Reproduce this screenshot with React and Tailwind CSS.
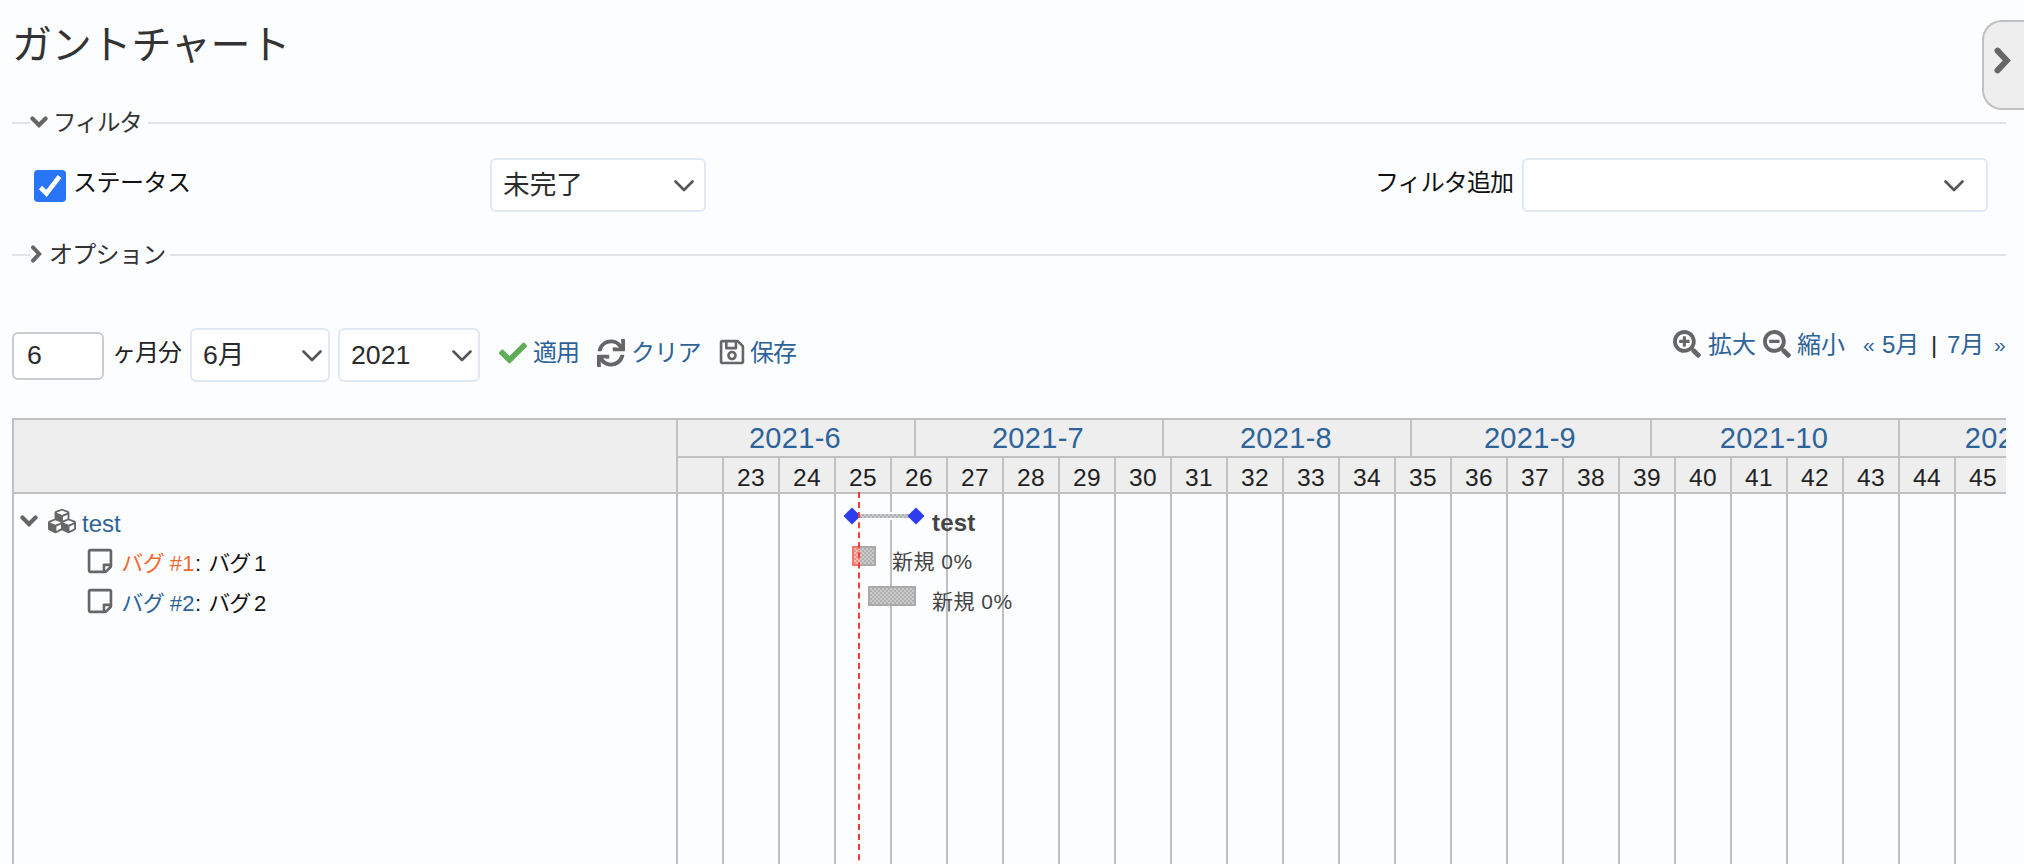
import React from "react";
import { FaCheck, FaCubes, FaRegSave, FaRegStickyNote, FaSearchMinus, FaSearchPlus, FaSync } from "react-icons/fa";

const months = [
  { label: "2021-6", width: "w-[238px]" },
  { label: "2021-7", width: "w-[248px]" },
  { label: "2021-8", width: "w-[248px]" },
  { label: "2021-9", width: "w-[240px]" },
  { label: "2021-10", width: "w-[248px]" },
  { label: "2021-11", width: "w-[240px]" },
];

const weeks = Array.from({ length: 23 }, (_, i) => 23 + i);

function Caret({ className = "" }) {
  return (
    <svg viewBox="0 0 20 12" className={"h-3 w-5 shrink-0 " + className} fill="none" stroke="#555" strokeWidth="2.6" strokeLinecap="round" strokeLinejoin="round">
      <path d="M1.5 1.5 10 10l8.5-8.5" />
    </svg>
  );
}

function ChevronDown({ className = "" }) {
  return (
    <svg viewBox="0 0 18 12" className={"h-3 w-[18px] shrink-0 " + className} fill="none" stroke="#666" strokeWidth="4.2" strokeLinecap="round" strokeLinejoin="miter">
      <path d="M2.4 2.6 9 9l6.6-6.4" />
    </svg>
  );
}

function ChevronRight({ className = "" }) {
  return (
    <svg viewBox="0 0 12 18" className={"shrink-0 " + className} fill="none" stroke="#666" strokeWidth="4" strokeLinecap="round" strokeLinejoin="miter">
      <path d="M3 2.4 9.2 9 3 15.6" />
    </svg>
  );
}

function Select({ value, className }) {
  return (
    <div className={"flex h-[54px] shrink-0 items-center justify-between rounded-md border-2 border-[#dfe8f3] bg-white pl-[11px] text-[26.67px] text-[#2b2b2b] " + className}>
      <span className="-mt-px">{value}</span>
      <Caret className="mt-0.5" />
    </div>
  );
}

function Legend({ icon, label, textClass }) {
  return (
    <div className="flex h-8 items-center">
      <span className="h-0.5 w-[18px] shrink-0 bg-[#e2e4e4]" />
      {icon}
      <span className={"shrink-0 whitespace-nowrap text-[#333] " + textClass}>{label}</span>
      <span className="h-0.5 flex-1 bg-[#e2e4e4]" />
    </div>
  );
}

function Issue({ id, name, number, color }) {
  return (
    <div className="flex h-10 items-center pl-[72px] text-[22px] text-[#111]">
      <FaRegStickyNote className="mr-[8px] size-7 shrink-0 text-[#666]" />
      <span className="mt-1 flex whitespace-pre">
        <span className={"w-[73px] tracking-[0.3px] [font-feature-settings:'palt'] " + color}>{"バグ #" + id}</span>
        <span className="w-[14px]">:</span>
        <span className="w-[45px] tracking-[-0.2px] [font-feature-settings:'palt']">{name}</span>
        <span>{number}</span>
      </span>
    </div>
  );
}

function Gantt() {
  return (
    <div className="flex h-[446px] w-[1994px] overflow-hidden border-l-2 border-[#c0c0c0]">
      <div className="w-[662px] shrink-0">
        <div className="h-[76px] border-y-2 border-[#c0c0c0] bg-[#eee]" />
        <div className="mt-1 flex h-10 items-center pt-2 text-[24px]">
          <ChevronDown className="-mt-0.5 ml-[6px]" />
          <FaCubes className="-mt-0.5 ml-[10px] size-7 shrink-0 text-[#666]" />
          <span className="ml-[6px] mt-[3px] text-[#2d6399]">test</span>
        </div>
        <div className="pt-[3px]">
          <Issue id="1" name="バグ" number="1" color="text-[#ee6a33]" />
          <Issue id="2" name="バグ" number="2" color="text-[#2d6399]" />
        </div>
      </div>
      <div className="relative w-[1330px] shrink-0 overflow-hidden">
        <div className="flex h-10 w-[1462px] border-y-2 border-[#c0c0c0] bg-[#eee]">
          {months.map((m) => (
            <div key={m.label} className={"flex shrink-0 items-center justify-center border-l-2 border-[#c0c0c0] pr-0.5 pt-px text-[29px] tracking-[0.3px] text-[#2d6399] " + m.width}>
              {m.label}
            </div>
          ))}
        </div>
        <div className="flex h-[408px] w-[1462px]">
          <div className="w-[46px] shrink-0 border-l-2 border-[#c0c0c0]">
            <div className="h-9 border-b-2 border-[#c0c0c0] bg-[#eee]" />
          </div>
          {weeks.map((w) => (
            <div key={w} className="w-14 shrink-0 border-l-2 border-[#c0c0c0]">
              <div className="flex h-9 items-center justify-center border-b-2 border-[#c0c0c0] bg-[#eee] pt-[6px] text-[24.5px] tracking-[0.4px] text-[#222]">
                {w}
              </div>
            </div>
          ))}
        </div>

        {/* Task bars placed on the time canvas */}
        <svg className="absolute left-0 top-[74px]" width="500" height="372">
          <defs>
            <pattern id="gray" width="4" height="4" patternUnits="userSpaceOnUse">
              <rect width="4" height="4" fill="#cacaca" />
              <rect width="2" height="2" fill="#b0b0b0" />
              <rect x="2" y="2" width="2" height="2" fill="#b0b0b0" />
            </pattern>
            <pattern id="red" width="4" height="4" patternUnits="userSpaceOnUse">
              <rect width="4" height="4" fill="#ffb9b3" />
              <rect width="2" height="2" fill="#f58e86" />
              <rect x="2" y="2" width="2" height="2" fill="#f58e86" />
            </pattern>
          </defs>
          <rect x="176" y="20" width="64" height="8" fill="#fcfdff" />
          <rect x="176" y="22" width="64" height="4" fill="url(#gray)" />
          <path d="M176 16.5l7.5 7.5-7.5 7.5-7.5-7.5zM240 16.5l7.5 7.5-7.5 7.5-7.5-7.5z" fill="#2f3cee" stroke="#2f3cee" strokeWidth="1.5" strokeLinejoin="round" />
          <rect x="176" y="54" width="24" height="20" fill="url(#gray)" />
          <rect x="177" y="55" width="22" height="18" fill="none" stroke="#aaa" strokeWidth="2" />
          <rect x="176" y="54" width="8" height="20" fill="url(#red)" />
          <path d="M184 55h-7v18h7" fill="none" stroke="#f0756c" strokeWidth="2" />
          <rect x="192" y="94" width="48" height="20" fill="url(#gray)" />
          <rect x="193" y="95" width="46" height="18" fill="none" stroke="#aaa" strokeWidth="2" />
          <path d="M183 0V372" stroke="#fb3a30" strokeWidth="2" strokeDasharray="6 4.06" />
        </svg>
        <span className="absolute left-[256px] top-[89px] text-[24px] leading-8 font-bold tracking-[0.2px] text-[#444]">test</span>
        <span className="absolute left-[216px] top-[128px] whitespace-nowrap text-[21px] leading-8 tracking-[0.5px] text-[#444]">新規 0%</span>
        <span className="absolute left-[256px] top-[168px] whitespace-nowrap text-[21px] leading-8 tracking-[0.5px] text-[#444]">新規 0%</span>
      </div>
    </div>
  );
}

export default function App() {
  return (
    <div className="relative h-[864px] w-[2024px] overflow-hidden bg-[#fcfdff] pl-3 font-['Liberation_Sans','Noto_Sans_CJK_JP',sans-serif]">
      <h1 className="h-[107px] pt-[15px] text-[40px] leading-[60px] tracking-[-0.2px] text-[#333]">ガントチャート</h1>

      <div className="w-[1994px]">
        <Legend
          icon={<ChevronDown className="-mt-0.5" />}
          label="フィルタ"
          textClass="pl-[5px] pt-0.5 w-[100px] text-[23.5px] tracking-[-1.3px]"
        />
        <div className="mt-[19px] flex h-[54px] items-center pl-[22px] text-[24px] text-[#111]">
          <svg viewBox="0 0 32 32" className="mt-[2px] size-8 shrink-0">
            <rect width="32" height="32" rx="4" fill="#2875f8" />
            <path d="M6.5 17.5l6 6L25.5 6.5" fill="none" stroke="#fff" strokeWidth="4.6" />
          </svg>
          <span className="-mt-1 ml-[7px] w-[417px] tracking-[-0.5px]">ステータス</span>
          <Select value="未完了" className="w-[216px] pr-[10px]" />
          <span className="-mt-1 ml-[669px] w-[147px] whitespace-nowrap tracking-[-0.9px]">フィルタ追加</span>
          <Select value="" className="w-[466px] pr-[22px]" />
        </div>
        <div className="mt-[27px]">
          <Legend
            icon={<ChevronRight className="-mt-0.5 h-[18px] w-3" />}
            label="オプション"
            textClass="pl-[7px] w-[128px] text-[24px] tracking-[-0.7px]"
          />
        </div>

        <div className="mt-[57px] flex h-[54px] items-center text-[24px] text-[#2d6399]">
          <div className="mt-[2px] flex h-12 w-[92px] shrink-0 items-center rounded-md border-2 border-[#ccc] bg-white pb-0.5 pl-[13px] text-[26.67px] text-[#2b2b2b]">6</div>
          <span className="-mt-1 ml-[8px] w-[78px] whitespace-nowrap tracking-[-1px] text-[#222]">ヶ月分</span>
          <Select value="6月" className="w-[140px] pr-[6px]" />
          <Select value="2021" className="ml-2 w-[142px] pr-[6px]" />
          <FaCheck className="-mt-1 ml-[19px] size-7 shrink-0 text-[#5fad56]" />
          <span className="-mt-1 ml-[6px] w-[64px] whitespace-nowrap tracking-[-1px]">適用</span>
          <FaSync className="-mt-1 size-7 shrink-0 text-[#666]" />
          <span className="-mt-1 ml-[6px] w-[87px] whitespace-nowrap tracking-[-0.8px]">クリア</span>
          <FaRegSave className="-mt-1.5 size-7 shrink-0 text-[#666]" />
          <span className="-mt-1 ml-[4px] whitespace-nowrap tracking-[-1px]">保存</span>
          <div className="-mt-5 ml-auto flex items-center whitespace-nowrap">
            <FaSearchPlus className="-mt-0.5 size-7 shrink-0 text-[#666]" />
            <span className="ml-[7px] w-[55px]">拡大</span>
            <FaSearchMinus className="-mt-0.5 size-7 shrink-0 text-[#666]" />
            <span className="ml-1.5 w-[66px]">縮小</span>
            <span className="w-[19px] text-[21px]">«</span>
            <span className="w-[49px]">5月</span>
            <span className="w-[16px] text-[#222]">|</span>
            <span className="w-[47px]">7月</span>
            <span className="w-[12px] text-[21px]">»</span>
          </div>
        </div>
        <div className="mt-9">
          <Gantt />
        </div>
      </div>

      <div className="absolute right-0 top-5 h-[90px] w-[42px] rounded-l-[20px] border-2 border-r-0 border-[#c0c0c0] bg-[#eee] pl-[9px] pt-[25px]">
        <ChevronRight className="h-[27px] w-[18px]" />
      </div>
    </div>
  );
}
